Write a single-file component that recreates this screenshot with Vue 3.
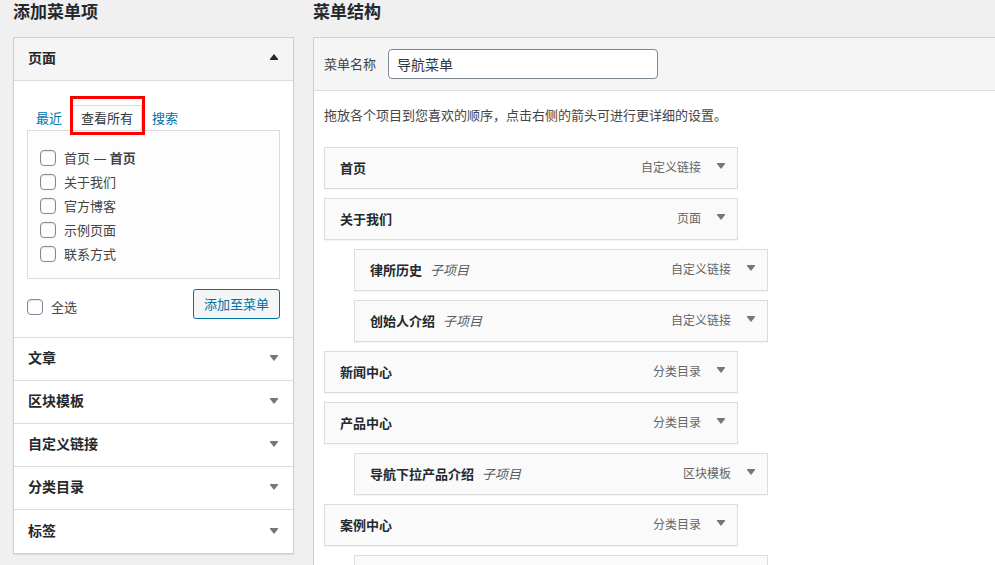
<script setup>
import { ref } from 'vue'

const menuName = ref('导航菜单')
const tabs = ['最近', '查看所有', '搜索']
const activeTab = ref('查看所有')
const checked = ref([])
const allChecked = ref(false)

const pages = [
  { id: 'home', title: '首页', state: '首页' },
  { id: 'about', title: '关于我们' },
  { id: 'blog', title: '官方博客' },
  { id: 'sample', title: '示例页面' },
  { id: 'contact', title: '联系方式' },
]

const sections = ['文章', '区块模板', '自定义链接', '分类目录', '标签']

const items = [
  { title: '首页', type: '自定义链接' },
  { title: '关于我们', type: '页面' },
  { title: '律所历史', type: '自定义链接', child: true },
  { title: '创始人介绍', type: '自定义链接', child: true },
  { title: '新闻中心', type: '分类目录' },
  { title: '产品中心', type: '分类目录' },
  { title: '导航下拉产品介绍', type: '区块模板', child: true },
  { title: '案例中心', type: '分类目录' },
  { title: '', type: '', child: true },
]

function toggleAll() {
  checked.value = allChecked.value ? pages.map((p) => p.id) : []
}
</script>

<template>
  <main class="page">
    <section class="side">
      <h2 class="heading">添加菜单项</h2>
      <div class="box">
        <button type="button" class="section-head open" aria-expanded="true">
          <span>页面</span>
          <svg class="arrow" viewBox="0 0 8 6" aria-hidden="true"><path d="M4 0 8 5v1H0V5z" /></svg>
        </button>
        <div class="section-body">
          <nav class="tabs">
            <a
              v-for="tab in tabs"
              :key="tab"
              href="#"
              class="tab"
              :class="{ active: tab === activeTab }"
              @click.prevent="activeTab = tab"
            >{{ tab }}<i v-if="tab === '查看所有'" class="marker"></i></a>
          </nav>
          <ul class="choices">
            <li v-for="page in pages" :key="page.id">
              <label class="choice">
                <input v-model="checked" type="checkbox" class="check" :value="page.id" />
                <span>{{ page.title }}<template v-if="page.state"> — <b>{{ page.state }}</b></template></span>
              </label>
            </li>
          </ul>
          <div class="actions">
            <label class="choice">
              <input v-model="allChecked" type="checkbox" class="check" @change="toggleAll" />
              <span>全选</span>
            </label>
            <button type="button" class="add">添加至菜单</button>
          </div>
        </div>
        <button v-for="name in sections" :key="name" type="button" class="section-head" aria-expanded="false">
          <span>{{ name }}</span>
          <svg class="arrow" viewBox="0 0 8 6" aria-hidden="true"><path d="M0 0h8v1L4 6 0 1z" /></svg>
        </button>
      </div>
    </section>

    <section class="structure">
      <h2 class="heading">菜单结构</h2>
      <div class="editor">
        <header class="editor-head">
          <label for="menu-name">菜单名称</label>
          <input id="menu-name" v-model="menuName" type="text" class="name" />
        </header>
        <div class="editor-body">
          <p class="hint">拖放各个项目到您喜欢的顺序，点击右侧的箭头可进行更详细的设置。</p>
          <ul class="items">
            <li v-for="(item, i) in items" :key="i" class="item" :class="{ child: item.child }">
              <span class="title">{{ item.title }}</span>
              <em v-if="item.child && item.title" class="sub">子项目</em>
              <span class="type">{{ item.type }}</span>
              <button type="button" class="toggle" aria-label="编辑">
                <svg class="arrow" viewBox="0 0 8 6" aria-hidden="true"><path d="M0 0h8v1L4 6 0 1z" /></svg>
              </button>
            </li>
          </ul>
        </div>
      </div>
    </section>
  </main>
</template>

<style>
html {
  scrollbar-width: none;
}
body {
  margin: 0;
  background: #f0f0f0;
}
</style>

<style scoped>
.page,
.page * {
  box-sizing: border-box;
}
.page {
  display: grid;
  grid-template-columns: 281px 1fr;
  gap: 19px;
  height: 100vh;
  overflow: hidden;
  padding-left: 13px;
  color: #444;
  font: 13px/20px "Noto Sans", "Noto Sans CJK SC", sans-serif;
}
button,
input {
  font: inherit;
}
ul {
  margin: 0;
  padding: 0;
  list-style: none;
}
.heading {
  margin: 0 0 13px;
  color: #23282d;
  font-size: 17px;
  font-weight: 700;
  line-height: 24px;
}
.box {
  border: 1px solid #ccd0d4;
  background: #fff;
  box-shadow: 0 1px 1px rgba(0, 0, 0, 0.08);
}
.section-head {
  display: flex;
  align-items: center;
  justify-content: space-between;
  width: 100%;
  height: 43px;
  padding: 0 15px 2px 14px;
  border: 0;
  border-bottom: 1px solid #dcdcde;
  background: #fff;
  color: #23282d;
  font-size: 14px;
  font-weight: 700;
}
.section-head:last-child {
  border-bottom: 0;
}
.section-head.open {
  background: #f5f5f5;
}
.arrow {
  display: block;
  flex: none;
  width: 8px;
  height: 6px;
  fill: #72777c;
}
.open .arrow {
  margin-bottom: 2px;
  fill: #23282d;
}
.section-body {
  padding: 24px 13px 18px;
  border-bottom: 1px solid #dcdcde;
}
.tabs {
  display: flex;
  gap: 1px;
}
.tab {
  position: relative;
  height: 25px;
  padding: 2px 8px;
  border: 1px solid transparent;
  border-bottom: 0;
  color: #0073aa;
  text-decoration: none;
}
.tab.active {
  border-color: #dcdcde;
  background: #fdfdfd;
  color: #32373c;
}
.marker {
  position: absolute;
  inset: -10px -4px -5px -3px;
  border: 3px solid #f00;
}
.choices {
  padding: 15px 12px 12px;
  border: 1px solid #dcdcde;
  background: #fdfdfd;
}
.choice {
  display: flex;
  align-items: center;
  gap: 8px;
  height: 24px;
}
.check {
  appearance: none;
  flex: none;
  width: 16px;
  height: 16px;
  margin: 0;
  border: 1px solid #7e8993;
  border-radius: 4px;
  background: #fff;
  box-shadow: inset 0 1px 2px rgba(0, 0, 0, 0.1);
}
.check:checked {
  background: #0071a1;
}
.actions {
  display: flex;
  align-items: flex-end;
  justify-content: space-between;
  padding-top: 10px;
}
.add {
  height: 30px;
  padding: 0 10px;
  border: 1px solid #0071a1;
  border-radius: 3px;
  background: #f3f5f6;
  color: #0071a1;
  line-height: 26px;
}
.editor {
  border: 1px solid #ccd0d4;
  border-right: 0;
  background: #fff;
}
.editor-head {
  display: flex;
  align-items: center;
  gap: 12px;
  height: 53px;
  padding: 0 10px;
  border-bottom: 1px solid #dcdcde;
  background: #f5f5f5;
}
.name {
  width: 270px;
  height: 30px;
  padding: 0 8px;
  border: 1px solid #7e8993;
  border-radius: 4px;
  background: #fff;
  color: #32373c;
  font-size: 14px;
}
.editor-body {
  padding: 14px 10px;
}
.hint {
  margin: 0 0 22px;
}
.items {
  display: flex;
  flex-direction: column;
  gap: 9px;
}
.item {
  display: flex;
  align-items: center;
  width: 414px;
  height: 42px;
  padding: 0 12px 0 15px;
  border: 1px solid #dcdcde;
  background: #fafafa;
  box-shadow: 0 1px 1px rgba(0, 0, 0, 0.04);
}
.item.child {
  margin-left: 30px;
}
.title {
  color: #23282d;
  font-weight: 700;
}
.sub {
  margin-left: 8px;
  color: #555d66;
}
.type {
  margin-left: auto;
  color: #666;
  font-size: 12px;
}
.toggle {
  margin-left: 16px;
  padding: 0 0 4px;
  border: 0;
  background: none;
}
</style>
